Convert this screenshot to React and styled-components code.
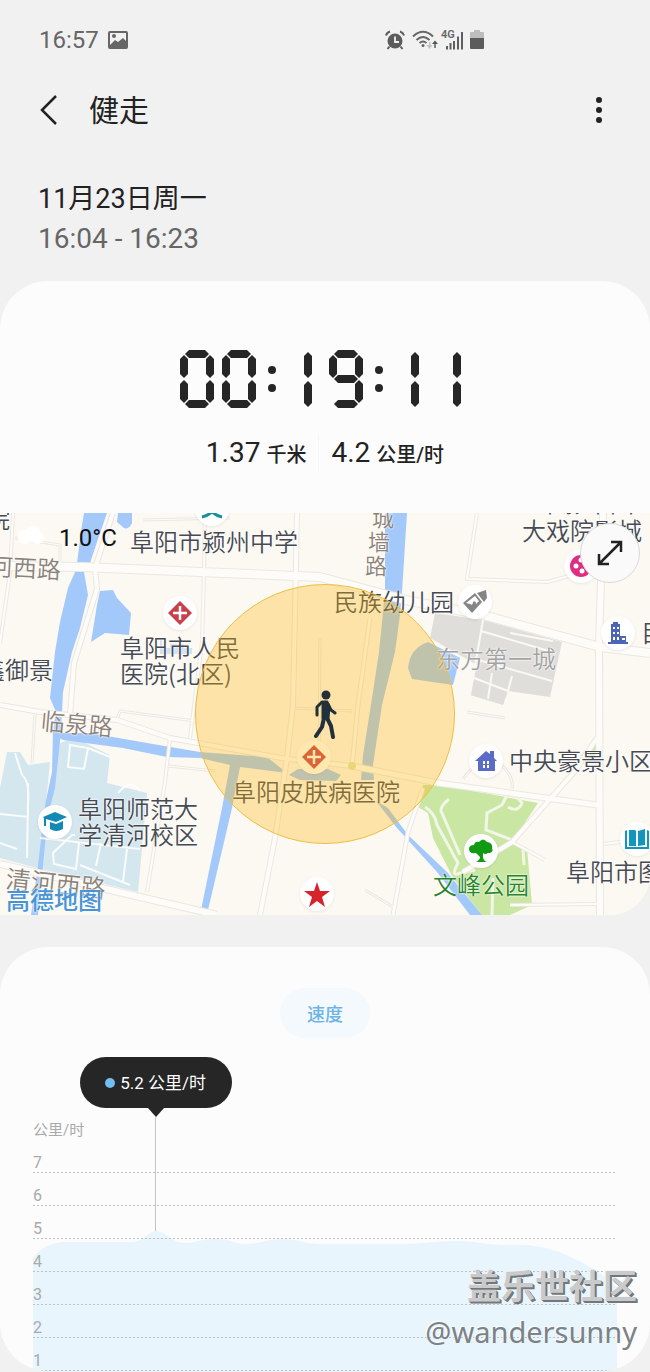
import React from "react";
import styled, { createGlobalStyle } from "styled-components"

    const GlobalStyle = createGlobalStyle`
    * {
        box-sizing: border-box;
    }
    body {
        margin: 0;
        background-color: #f1f1f1;
        font-family: Roboto, "Noto Sans CJK SC", sans-serif;
        color: #222;
    }
    `
    const MainDiv = styled.main`
    display: flex;
    flex-direction: column;
    overflow: hidden;
    `
    const StatusBar = styled.div`
    display: flex;
    align-items: center;
    justify-content: space-between;
    height: 80px;
    padding: 0 166px 0 39px;
    color: #666;
    font-size: 24px;
    `
    const StatusGroup = styled.div`
    display: flex;
    align-items: center;
    gap: ${props => props.$gap || 9}px;
    `
    const SignalWrapper = styled.div`
    display: flex;
    position: relative;
    margin-left: -3px;
    `
    const SignalText = styled.span`
    position: absolute;
    left: -2px;
    top: -1px;
    font-size: 11px;
    line-height: 12px;
    font-weight: 600;
    `
    const TitleBar = styled.header`
    display: flex;
    align-items: center;
    height: 60px;
    padding: 0 36px 0 34px;
    `
    const IconButton = styled.button`
    display: flex;
    align-items: center;
    justify-content: center;
    height: 48px;
    width: 30px;
    padding: 0;
    border: none;
    background: none;
    color: #222;
    cursor: pointer;
    `
    const Title = styled.h1`
    flex: 1;
    margin: 0 0 0 25px;
    padding-top: 2px;
    font-size: 30px;
    line-height: 40px;
    font-weight: 400;
    `
    const DateBlock = styled.div`
    display: flex;
    flex-direction: column;
    padding: 39px 38px 22px;
    `
    const DateText = styled.span`
    font-size: ${props => props.$muted?"28px":"27px"};
    line-height: 40px;
    color: ${props => props.$muted?"#666":"#222"};
    `
    const Card = styled.section`
    display: flex;
    flex-direction: column;
    position: relative;
    overflow: hidden;
    background-color: #fcfcfc;
    border-radius: ${props => props.$radius};
    & + & {
        margin-top: 32px;
    }
    `
    const Timer = styled.div`
    display: flex;
    justify-content: center;
    gap: 8px;
    padding-top: 69px;
    `
    const Digit = styled.div`
    display: grid;
    grid-template-columns: 4px 4px 18px 4px 4px;
    grid-template-rows: 4px 4px 17px 4px 4px 17px 4px 4px;
    `
    const Segment = styled.span`
    grid-area: ${props => props.$area};
    margin: ${props => props.$flat?"0 1px":"1px 0"};
    background-color: #262626;
    clip-path: ${props => props.$flat
        ?"polygon(0 50%, 4px 0, calc(100% - 4px) 0, 100% 50%, calc(100% - 4px) 100%, 4px 100%)"
        :"polygon(50% 0, 100% 4px, 100% calc(100% - 4px), 50% 100%, 0 calc(100% - 4px), 0 4px)"};
    `
    const MiddleSegment = styled(Segment)`
    justify-self: end;
    width: 8px;
    margin: 2px 1px 1px 0;
    `
    const Colon = styled.div`
    display: flex;
    flex-direction: column;
    align-items: center;
    justify-content: center;
    gap: 10px;
    width: 15px;
    `
    const ColonDot = styled.span`
    width: 8px;
    height: 8px;
    border-radius: 50%;
    background-color: #262626;
    `
    const Stats = styled.div`
    display: flex;
    justify-content: center;
    padding: 26px 0 41px;
    `
    const Stat = styled.div`
    display: flex;
    align-items: baseline;
    gap: 6px;
    padding: 0 12px;
    & + & {
        border-left: 1px solid #f7f7f7;
    }
    `
    const StatValue = styled.span`
    font-size: 28px;
    line-height: 38px;
    `
    const StatUnit = styled.span`
    font-size: 20px;
    font-weight: 500;
    `
    const Map = styled.div`
    position: relative;
    width: 100%;
    aspect-ratio: 650 / 402;
    overflow: hidden;
    background-color: #fcf8f2;
    `
    const MapSvg = styled.svg`
    display: block;
    width: 100%;
    height: 100%;
    `
    // x and y are map units, the map is 650 x 402
    const MapLabel = styled.span`
    position: absolute;
    left: ${props => props.$x / 6.5}%;
    top: ${props => props.$y / 4.02}%;
    transform: translateY(-50%) rotate(${props => props.$turn || 0}deg);
    font-family: "Noto Sans CJK SC", sans-serif;
    font-size: ${props => props.$size || 24}px;
    line-height: ${props => props.$size === 22?24:26}px;
    font-weight: ${props => props.$weight || 350};
    white-space: pre;
    color: ${props => props.$color || "#454a53"};
    text-shadow: 0 0 2px #fff, 0 0 2px #fff;
    `
    const Temperature = styled(MapLabel)`
    font-family: Roboto, sans-serif;
    font-weight: 400;
    text-shadow: none;
    `
    const Pin = styled.div`
    position: absolute;
    left: ${props => props.$x / 6.5}%;
    top: ${props => props.$y / 4.02}%;
    transform: translate(-50%, -50%);
    display: flex;
    align-items: center;
    justify-content: center;
    width: 34px;
    height: 34px;
    border-radius: 50%;
    background-color: #fff;
    box-shadow: 0 1px 3px rgba(0,0,0,0.08);
    `
    const Radius = styled.div`
    position: absolute;
    left: 30%;
    top: 71px;
    width: 40%;
    aspect-ratio: 1;
    border-radius: 50%;
    border: 1px solid #ecbf45;
    background-color: rgba(255,182,10,0.32);
    `
    const Walker = styled.svg`
    position: absolute;
    left: 50%;
    top: 50%;
    transform: translate(-50%, -50%);
    `
    const ExpandButton = styled.button`
    position: absolute;
    right: 10px;
    top: 10px;
    display: flex;
    align-items: center;
    justify-content: center;
    width: 60px;
    height: 60px;
    padding: 0;
    border: 1px solid #dcd8d8;
    border-radius: 50%;
    background-color: #fafafa;
    cursor: pointer;
    `
    const SpeedButton = styled.button`
    align-self: center;
    margin-top: 41px;
    width: 90px;
    height: 50px;
    border: none;
    border-radius: 25px;
    background-color: #f3f9fd;
    color: #6cb4e6;
    font-family: inherit;
    font-size: 18px;
    font-weight: 500;
    cursor: pointer;
    `
    const Chart = styled.div`
    display: grid;
    position: relative;
    margin: 82px 33px 0;
    grid-template-rows: 20px 231px;
    color: #aaa;
    font-size: 15px;
    line-height: 20px;
    `
    const Area = styled.svg`
    grid-area: 2 / 1;
    width: 100%;
    height: 100%;
    `
    const Scale = styled.ul`
    grid-area: 2 / 1;
    list-style: none;
    margin: 0;
    padding: 0;
    `
    const ScaleRow = styled.li`
    display: flex;
    align-items: flex-end;
    height: 33px;
    font-size: 16px;
    background: repeating-linear-gradient(90deg, #bcc1c3 0 2px, transparent 2px 4px) left bottom / 100% 1px no-repeat;
    `
    const Marker = styled.div`
    position: absolute;
    left: 21%;
    top: -63px;
    transform: translateX(-50%);
    display: flex;
    flex-direction: column;
    align-items: center;
    `
    const Bubble = styled.div`
    display: flex;
    align-items: center;
    justify-content: center;
    gap: 5px;
    width: 152px;
    height: 51px;
    border-radius: 26px;
    background-color: #262626;
    color: #fff;
    font-size: 17px;
    `
    const BubbleDot = styled.span`
    width: 10px;
    height: 10px;
    border-radius: 50%;
    background-color: #72bdf2;
    `
    const Arrow = styled.span`
    border: 8px solid transparent;
    border-top: 9px solid #262626;
    border-bottom: none;
    `
    const Stem = styled.span`
    width: 1px;
    height: 114px;
    background-color: #c4c4c4;
    `
    const Watermark = styled.div`
    position: absolute;
    right: 13px;
    bottom: 17px;
    display: flex;
    flex-direction: column;
    align-items: flex-end;
    `
    const WatermarkName = styled.span`
    font-size: 34px;
    line-height: 46px;
    font-weight: 700;
    color: #c9cacb;
    text-shadow: 1px 1px 0 #72777a, 2px 2px 0 #72777a, -1px -1px 0 #f4f4f4;
    `
    const WatermarkUser = styled.span`
    font-family: "Noto Sans", sans-serif;
    font-size: 29px;
    line-height: 44px;
    color: #7c8286;
    text-shadow: -1px -1px 0 #fff;
    `

const segments = {
    a: {area: "1 / 2 / 3 / 5", flat: true},
    b: {area: "2 / 4 / 5 / 6"},
    c: {area: "5 / 4 / 8 / 6"},
    d: {area: "7 / 2 / 9 / 5", flat: true},
    e: {area: "5 / 1 / 8 / 3"},
    f: {area: "2 / 1 / 5 / 3"},
    g: {area: "4 / 2 / 6 / 5", flat: true},
    // the one stands nearer to the middle of its cell
    h: {area: "1 / 3 / 5 / 4", middle: true},
    i: {area: "5 / 3 / 9 / 4", middle: true},
}
const lit = {"0": "abcdef", "1": "hi", "9": "abcdfg"}

const roads = [
    {d: "M13 0 L10 60 L0 130", w: 2},
    {d: "M15 25 L60 32 L60 55", w: 1},
    {d: "M113 0 L95 55 L97 76 L74 150 L70 202", w: 4},
    {d: "M205 0 L204 60 L202 130 L190 225", w: 2},
    {d: "M297 0 L295 100 L293 192 L287 245 L275 325 L260 402", w: 4},
    {d: "M143 7 L230 5", w: 1},
    {d: "M477 0 L467 66 L547 69 L573 62", w: 2},
    {d: "M320 125 L319 246", w: 1},
    {d: "M370 105 L358 192 L352 253", w: 3},
    {d: "M293 195 L352 198", w: 1},
    {d: "M0 192 L40 199 L117 207 L170 225 L287 246 L352 253", w: 4},
    {d: "M35 202 L32 250", w: 1},
    {d: "M117 207 L120 198 L195 208", w: 1},
    {d: "M170 225 L165 269 L147 379", w: 2},
    {d: "M168 253 L215 258", w: 1},
    {d: "M423 275 L408 319 L393 402", w: 3},
    {d: "M597 225 L575 258 L512 329 L463 359", w: 4},
    {d: "M463 266 Q475 248 495 246 Q515 262 512 276", w: 1},
    {d: "M365 377 L395 395", w: 1},
    {d: "M512 329 L545 347", w: 2},
    {d: "M604 331 L620 329", w: 2},
    {d: "M467 199 L505 205", w: 1},
    {d: "M0 53 L83 54 L200 59 L320 64 L410 88 L483 102 L600 134 L650 140", w: 8},
    {d: "M603 0 L599 134 L600 402", w: 6},
    {d: "M352 253 L438 270 L597 292", w: 5},
    {d: "M0 351 L110 377 L217 402", w: 6},
    {d: "M510 392 L600 391", w: 2},
]

const labels = [
    {x: -14, y: 5, text: "院"},
    {x: 130, y: 28, text: "阜阳市颍州中学"},
    {x: -11, y: 54, text: "河西路", color: "#8c8278", turn: 3},
    {x: 372, y: 3, text: "城", color: "#8c8278", size: 22},
    {x: 368, y: 27, text: "墙", color: "#8c8278", size: 22},
    {x: 365, y: 51, text: "路", color: "#8c8278", size: 22},
    {x: 538, y: -11, text: "华影中国"},
    {x: 522, y: 17, text: "大戏院影城"},
    {x: 334, y: 88, text: "民族幼儿园"},
    {x: 436, y: 145, text: "东方第一城", color: "#a3a3a3"},
    {x: 641, y: 119, text: "目"},
    {x: 120, y: 147, text: "阜阳市人民\n医院(北区)"},
    {x: -19, y: 156, text: "鑫御景"},
    {x: 41, y: 210, text: "临泉路", color: "#8c8278", turn: 5},
    {x: 232, y: 278, text: "阜阳皮肤病医院"},
    {x: 509, y: 247, text: "中央豪景小区"},
    {x: 78, y: 308, text: "阜阳师范大\n学清河校区"},
    {x: 566, y: 358, text: "阜阳市图书馆"},
    {x: 433, y: 371, text: "文峰公园", color: "#27842b"},
    {x: 6, y: 369, text: "清河西路", color: "#8c8278", turn: 6, size: 25},
]

const Timepiece = ({value}) => (
    <Timer role="timer" aria-label={value}>
        {value.split("").map((char, index) => char === ":" ? (
            <Colon key={index}><ColonDot/><ColonDot/></Colon>
        ) : (
            <Digit key={index}>
                {lit[char].split("").map(name => {
                    const Part = segments[name].middle ? MiddleSegment : Segment
                    return <Part key={name} $area={segments[name].area} $flat={segments[name].flat}/>
                })}
            </Digit>
        ))}
    </Timer>
)

const StatusIcons = () => (
    <StatusGroup $gap={7}>
        <svg width="20" height="20" viewBox="0 0 20 20">
            <circle cx="10" cy="11" r="7.5" fill="#5c5c5c"/>
            <path d="M1 5.500 A6 6 0 0 1 5 1.500 M19 5.500 A6 6 0 0 0 15 1.500 M4.500 16.500 L2.500 19 M15.500 16.500 L17.500 19" stroke="#5c5c5c" strokeWidth="2" fill="none"/>
            <path d="M10 6.500 V12 H14" stroke="#f1f1f1" strokeWidth="1.800" fill="none"/>
        </svg>
        <svg width="27" height="20" viewBox="0 0 27 20" fill="none" stroke="#666" strokeWidth="2">
            <path d="M1 6.500 Q11 -3 21 6.500 M4.500 10 Q11 4 17.500 10 M7.500 13 Q11 10 14.500 13"/>
            <circle cx="11" cy="15.500" r="1.500" fill="#666" stroke="none"/>
            <path d="M17 12 V15 H14.500 L17.500 19 L20.500 15 H18.500 V12 Z" fill="#c4c4c4" stroke="none"/>
            <path d="M22.300 18 V14 H20 L23 10.500 L26 14 H23.700 V18 Z" fill="#555" stroke="none"/>
        </svg>
        <SignalWrapper>
            <SignalText>4G</SignalText>
            <svg width="20" height="20" viewBox="0 0 20 20" fill="#5f5f5f">
                <path d="M3 16 h2 v3.500 h-2z M6.500 13 h2 v6.500 h-2z M10 11 h2 v8.500 h-2z M14 6.500 h2 v13 h-2z M18 2 h2 v17.500 h-2z"/>
            </svg>
        </SignalWrapper>
        <svg width="14" height="20" viewBox="0 0 14 20">
            <path d="M0 3 Q0 2 1 2 H4 V0 H10 V2 H13 Q14 2 14 3 V9 H0 Z" fill="#bdbdbd"/>
            <path d="M0 8 H14 V18 Q14 19 13 19 H1 Q0 19 0 18 Z" fill="#5c5c5c"/>
        </svg>
    </StatusGroup>
)

const MapBase = () => (
    <MapSvg viewBox="0 0 650 402" preserveAspectRatio="none">
        <g fill="#d5e7ee">
            <path d="M7 239 L20 239 L28 252 L50 249 L45 300 L60 230 L75 225 L110 242 L107 270 L147 280 L138 379 L37 355 L0 345 V275 Z"/>
        </g>
        <path d="M435 100 L483 107 L562 129 L550 184 L508 178 L503 192 L470 182 L477 152 L430 125 Z" fill="#e0deda"/>
        <path d="M483 107 L470 182 M481 118 L556 140 M510 120 L553 128 M475 146 L552 168 M474 165 L508 178 M512 163 L508 178 M492 160 L488 186" stroke="#fbf9f5" strokeWidth="2" fill="none"/>
        <path d="M423 272 L440 272 L538 290 L512 329 L527 335 L532 392 L510 402 L482 402 L453 365 L433 325 L428 300 L418 294 Z M596 229 L597 245 L580 243 Z" fill="#c9e6a3"/>
        <g fill="#a3c9fa">
            <path d="M84 0 L107 0 L97 29 L90 50 L84 59 L88 82 L80 115 L72 139 L63 179 L61 219 L55 275 L48 302 L38 402 L31 402 L38 352 L45 292 L52 259 L53 219 L56 199 L50 185 L55 139 L60 109 L68 75 L75 59 L77 50 L82 12 Z"/>
            <path d="M118 0 H132 V10 Q129 17 124 15 L117 9 Z"/>
            <path d="M100 78 L113 77 L117 85 L131 100 L129 122 L105 120 L91 129 L97 92 Z"/>
            <path d="M52 220 L90 220 L170 234 L200 239 L267 244 L287 260 L240 254 L232 295 L208 397 L201 397 L222 295 L230 252 L200 245 L167 244 L123 235 L63 227 Z"/>
            <path d="M289 262 L298 256 H328 L341 262 L336 268 L300 267 Z"/>
            <path d="M385 0 H407 L402 79 L400 102 L395 139 L382 192 L373 252 L374 267 L361 267 L363 242 L372 185 L379 139 L383 99 L385 75 Z"/>
            <path d="M376 288 L388 295 L408 322 L447 359 L482 402 L470 402 L437 359 L397 315 Z"/>
            <path d="M408 155 Q410 135 428 129 L440 135 L460 145 L453 172 L412 166 Z"/>
            <path d="M160 127 h2 v8 h8 v-4 h14 v4 h8 v6 h-32 z" opacity="0.5"/>
        </g>
        <path d="M0 301 L28 304 L28 270 M15 240 L22 262 Q30 268 28 290 L27 345 M0 330 L17 336 M70 232 L68 254 L84 256 L88 235 Z M88 235 L110 244 M118 280 Q130 265 140 278 M40 325 L140 336 M75 322 L72 322 L53 340 L54 351 L76 356 L79 330 M101 330 L96 353 M127 336 L123 369 M80 352 L130 372" stroke="#fff" strokeWidth="2" fill="none" opacity="0.85"/>
        <path d="M449 286 Q438 295 442 300 L460 342 M425 294 Q435 300 437 312 L458 350 Q450 365 460 360 L475 357 M506 284 L502 292 L487 300 L486 317 L515 328 M506 284 Q515 280 522 290 Q518 300 508 294 M523 336 L524 352 M493 365 L492 402" stroke="#f2f6e6" strokeWidth="3" fill="none"/>
        <g fill="none" strokeLinejoin="round">
            {roads.map(road => <path key={road.d} d={road.d} stroke="#ebe7e1" strokeWidth={road.w + 2}/>)}
            {roads.map(road => <path key={road.d + "top"} d={road.d} stroke="#fefcf9" strokeWidth={road.w}/>)}
        </g>
        <circle cx="352" cy="253" r="4" fill="#dce7a8"/>
        <g fill="#fff">
            <circle cx="25" cy="24" r="7"/>
            <circle cx="33" cy="21" r="8"/>
            <circle cx="38" cy="25" r="6"/>
        </g>
    </MapSvg>
)

const Hospital = () => (
    <svg width="26" height="26" viewBox="0 0 26 26">
        <path d="M13 1 L25 13 L13 25 L1 13 Z" fill="#cb3f4a"/>
        <path d="M13 6 V20 M6 13 H20" stroke="#fff" strokeWidth="2.500"/>
    </svg>
)

const Pins = () => (
    <>
        <Pin $x={212} $y={-4}>
            <svg width="22" height="22" viewBox="0 0 22 22" fill="none" stroke="#18909c" strokeWidth="3">
                <path d="M1 19 Q6 18 11 14 Q16 18 21 19"/>
            </svg>
        </Pin>
        <Pin $x={180} $y={100}><Hospital/></Pin>
        <Pin $x={314} $y={244}><Hospital/></Pin>
        <Pin $x={475} $y={89}>
            <svg width="26" height="26" viewBox="0 0 26 26" fill="#858585">
                <path d="M1 14 L13 4 L20 13 L10 24 Z"/>
                <path d="M15 4 L24 1 L25 9 L22 13 Z"/>
                <path d="M4 14 L13 7 L17 12 L14 15 Q14 11 11 13 Q11 17 8 15 Z" fill="#fff"/>
            </svg>
        </Pin>
        <Pin $x={581} $y={53}>
            <svg width="24" height="24" viewBox="0 0 24 24">
                <circle cx="12" cy="12" r="11" fill="#df2d85"/>
                <g fill="#fff">
                    <circle cx="7" cy="12" r="2.500"/>
                    <circle cx="12" cy="6" r="2.500"/>
                    <circle cx="13" cy="17" r="2.500"/>
                </g>
            </svg>
        </Pin>
        <Pin $x={618} $y={120}>
            <svg width="20" height="22" viewBox="0 0 20 22">
                <path d="M3 20 V2 H5 V0 H10 V2 H12 V14 H18 V20 H20 V22 H0 V20 Z" fill="#4b66b5"/>
                <path d="M5 5 h2 v2 h-2z M9 5 h2 v2 h-2z M5 10 h2 v2 h-2z M9 10 h2 v2 h-2z M5 15 h2 v3 h-2z M9 15 h2 v3 h-2z M14 16 h3 v2 h-3z" fill="#fff"/>
            </svg>
        </Pin>
        <Pin $x={486} $y={248}>
            <svg width="22" height="22" viewBox="0 0 22 22">
                <path d="M11 1 L15 4 V1 H19 V8 L22 11 H20 V21 H3 V11 H0 Z" fill="#5a6bc8"/>
                <path d="M8 11 h2 v3 h-2z M12 11 h2 v3 h-2z M8 15 h2 v3 h-2z M12 15 h2 v3 h-2z" fill="#fff"/>
            </svg>
        </Pin>
        <Pin $x={481} $y={338}>
            <svg width="26" height="26" viewBox="0 0 26 26" fill="#129a14">
                <path d="M6 7 Q7 3 11 4 Q15 -1 19 4 Q25 5 24 10 Q26 15 20 15 Q17 17 15 15 V20 Q16 23 19 24 H8 Q12 22 12 19 L8 15 Q1 16 1 11 Q1 7 6 7 Z"/>
            </svg>
        </Pin>
        <Pin $x={637} $y={326}>
            <svg width="24" height="20" viewBox="0 0 24 20" fill="#1296bd">
                <path d="M0 2 L2 1 V18 H22 V1 L24 2 V20 H0 Z M4 1 H10 L11 2 V17 H4 Z M13 2 L20 0 V16 L13 17 Z"/>
            </svg>
        </Pin>
        <Pin $x={317} $y={381}>
            <svg width="26" height="25" viewBox="0 0 26 25" fill="#d8232a">
                <path d="M13 0 L16 9 H26 L18 15 L21 25 L13 19 L5 25 L8 15 L0 9 H10 Z"/>
            </svg>
        </Pin>
        <Pin $x={55} $y={309}>
            <svg width="24" height="22" viewBox="0 0 24 22" fill="#1389b5">
                <path d="M0 6 L12 1 L24 6 L13 11 L3 8 V15 H1 V7 Z M7 11 L13 13 L20 10 V18 Q13 22 7 18 Z"/>
            </svg>
        </Pin>
    </>
)

const speedPath = "M0 118 Q10 104 29 102 H100 C112 101 115 91 123 91 C133 91 138 102 150 103 C165 103 165 99 183 99 C200 99 200 104 212 104 C230 104 230 99 249 99 C268 99 268 104 290 104 H365 C395 104 400 101 423 101 C445 101 445 104 470 105 C500 104 510 107 527 112 C545 120 575 135 584 148 V231 H0 Z"

export default function App () {
    return (
        <MainDiv>
            <GlobalStyle/>
            <StatusBar>
                <StatusGroup>
                    <span>16:57</span>
                    <svg width="20" height="18" viewBox="0 0 20 18">
                        <rect x="1" y="1" width="18" height="16" rx="1" fill="none" stroke="#666" strokeWidth="2"/>
                        <path d="M2 14 L7 9 L10 11 L15 7 L19 11 V17 H2 Z" fill="#666"/>
                        <circle cx="6" cy="5" r="2" fill="#666"/>
                    </svg>
                </StatusGroup>
                <StatusIcons/>
            </StatusBar>
            <TitleBar>
                <IconButton aria-label="返回">
                    <svg width="18" height="30" viewBox="0 0 18 30" fill="none" stroke="#222" strokeWidth="2.500">
                        <path d="M16 1 L2 15 L16 29"/>
                    </svg>
                </IconButton>
                <Title>健走</Title>
                <IconButton aria-label="更多">
                    <svg width="6" height="28" viewBox="0 0 6 28" fill="#222">
                        <circle cx="3" cy="4" r="3"/>
                        <circle cx="3" cy="14" r="3"/>
                        <circle cx="3" cy="24" r="3"/>
                    </svg>
                </IconButton>
            </TitleBar>
            <DateBlock>
                <DateText>11月23日周一</DateText>
                <DateText $muted>16:04 - 16:23</DateText>
            </DateBlock>
            <Card $radius="48px 48px 40px 0">
                <Timepiece value="00:19:11"/>
                <Stats>
                    <Stat><StatValue>1.37</StatValue><StatUnit>千米</StatUnit></Stat>
                    <Stat><StatValue>4.2</StatValue><StatUnit>公里/时</StatUnit></Stat>
                </Stats>
                <Map>
                    <MapBase/>
                    <Pins/>
                    {labels.map(label => (
                        <MapLabel key={label.text + label.x} $x={label.x} $y={label.y} $color={label.color} $turn={label.turn} $size={label.size}>
                            {label.text}
                        </MapLabel>
                    ))}
                    <MapLabel $x={6} $y={386} $color="#4795d6" $weight={500}>高德地图</MapLabel>
                    <Temperature $x={59} $y={25} $color="#111">1.0°C</Temperature>
                    <Radius/>
                    <Walker width="24" height="50" viewBox="0 0 24 50" fill="none" stroke="#22303a" strokeLinecap="round" strokeLinejoin="round">
                        <circle cx="13" cy="6" r="4.500" fill="#22303a" stroke="none"/>
                        <path d="M10 13 H14 L16 18 L15 29 L10 29 Z" fill="#22303a" strokeWidth="3"/>
                        <path d="M9 13 L4 18 V26 M15 15 L18 21 L22 24" strokeWidth="3"/>
                        <path d="M11 29 L9 38 L3 47 M14 29 L18 37 L20 48" strokeWidth="4"/>
                    </Walker>
                    <ExpandButton aria-label="展开">
                        <svg width="26" height="26" viewBox="0 0 26 26" fill="none" stroke="#222" strokeWidth="2.500">
                            <path d="M3 23 L23 3 M14 2 H24 V12 M2 14 V24 H12"/>
                        </svg>
                    </ExpandButton>
                </Map>
            </Card>
            <Card $radius="48px">
                <SpeedButton>速度</SpeedButton>
                <Chart>
                    <span>公里/时</span>
                    <Area viewBox="0 0 584 231" preserveAspectRatio="none">
                        <path d={speedPath} fill="#e8f5fc"/>
                    </Area>
                    <Scale>
                        {[7, 6, 5, 4, 3, 2, 1].map(speed => <ScaleRow key={speed}>{speed}</ScaleRow>)}
                    </Scale>
                    <Marker>
                        <Bubble><BubbleDot/>5.2 公里/时</Bubble>
                        <Arrow/>
                        <Stem/>
                    </Marker>
                </Chart>
                <Watermark>
                    <WatermarkName>盖乐世社区</WatermarkName>
                    <WatermarkUser>@wandersunny</WatermarkUser>
                </Watermark>
            </Card>
        </MainDiv>
    )
}
